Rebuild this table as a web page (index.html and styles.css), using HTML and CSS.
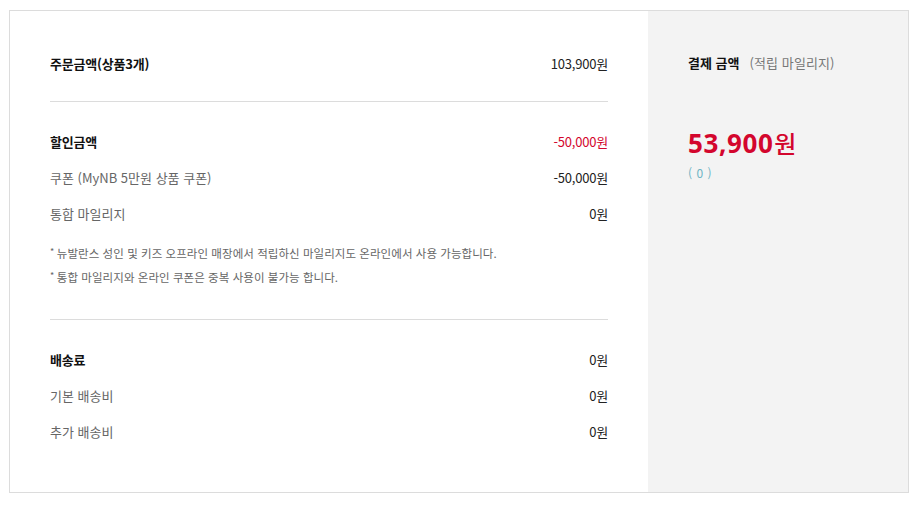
FILE: index.html
```html
<!DOCTYPE html>
<html lang="ko">
<head>
<meta charset="utf-8">
<link rel="stylesheet" href="styles.css">
</head>
<body>
<div class="box">
  <div class="main">
    <section class="sec first">
      <div class="row head"><span class="label">주문금액(상품3개)</span><span class="val">103,900원</span></div>
    </section>
    <section class="sec">
      <div class="row head"><span class="label">할인금액</span><span class="val red">-50,000원</span></div>
      <div class="row sub"><span class="label">쿠폰 (MyNB 5만원 상품 쿠폰)</span><span class="val">-50,000원</span></div>
      <div class="row sub"><span class="label">통합 마일리지</span><span class="val">0원</span></div>
      <ul class="notes">
        <li>뉴발란스 성인 및 키즈 오프라인 매장에서 적립하신 마일리지도 온라인에서 사용 가능합니다.</li>
        <li>통합 마일리지와 온라인 쿠폰은 중복 사용이 불가능 합니다.</li>
      </ul>
    </section>
    <section class="sec last">
      <div class="row head"><span class="label">배송료</span><span class="val">0원</span></div>
      <div class="row sub"><span class="label">기본 배송비</span><span class="val">0원</span></div>
      <div class="row sub"><span class="label">추가 배송비</span><span class="val">0원</span></div>
    </section>
  </div>
  <aside class="side">
    <div class="side-title"><strong>결제 금액</strong><span class="side-note">(적립 마일리지)</span></div>
    <div class="total"><span class="num">53,900</span><span class="won">원</span></div>
    <div class="mile">( 0 )</div>
  </aside>
</div>
</body>
</html>
```
FILE: styles.css
```css
* { box-sizing: border-box; margin: 0; padding: 0; }
html, body { background: #fff; }
body {
  padding: 10px 11px 0 9px;
  font-family: "Noto Sans CJK KR", "Noto Sans", sans-serif;
  color: #222;
}
.box {
  display: flex;
  width: 900px;
  height: 483px;
  border: 1px solid #dcdcdc;
}
.main {
  flex: 0 0 638px;
  padding: 0 40px;
  background: #fff;
}
.sec {
  padding: 30px 0 30px;
  border-bottom: 1px solid #dcdcdc;
}
.sec.first { padding: 43px 0 27px; }
.sec.last { border-bottom: none; }
.row {
  display: flex;
  justify-content: space-between;
  align-items: center;
  height: 20px;
  font-size: 13px;
  line-height: 20px;
}
.row + .row { margin-top: 16px; }
.row.head .label { font-weight: 700; color: #111; letter-spacing: -0.2px; }
.row.sub .label { color: #666; letter-spacing: 0; }
.val { color: #222; letter-spacing: -0.2px; }
.val.red { color: #d3062d; }
.notes {
  list-style: none;
  margin-top: 17px;
  font-size: 11.5px;
  line-height: 24px;
  color: #666;
  letter-spacing: 0.05px;
}
.notes li::before { content: "* "; font-size: 9px; vertical-align: top; position: relative; top: -1px; }
.side {
  flex: 1;
  background: #f3f3f3;
  padding: 42px 40px 0;
}
.side-title { font-size: 13px; line-height: 20px; }
.side-title strong { font-weight: 700; color: #111; }
.side-note { color: #777; margin-left: 10px; letter-spacing: 0.1px; }
.total {
  margin-top: 55px;
  color: #d3062d;
  line-height: 30px;
  display: flex;
  align-items: baseline;
}
.total .num { font-family: "Open Sans", sans-serif; font-weight: 700; font-size: 26px; letter-spacing: 0.6px; }
.total .won { font-size: 24px; font-weight: 500; margin-left: 1px; }
.mile {
  margin-top: 7px;
  font-size: 12px;
  line-height: 16px;
  color: #6fb3c4;
  letter-spacing: 0.5px;
}
```
